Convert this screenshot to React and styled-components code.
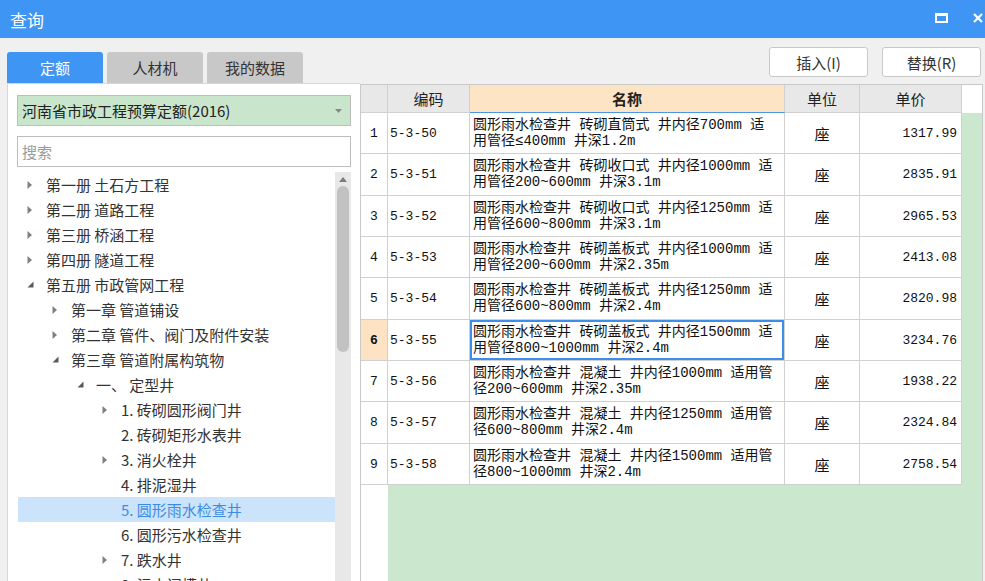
import React from "react";
import styled, { createGlobalStyle, css } from "styled-components";

const GlobalStyle = createGlobalStyle`
  html, body {
    margin: 0;
    padding: 0;
    overflow: hidden;
    background: #f0f0f0;
  }
  body {
    font-family: "Noto Sans CJK SC", "Noto Sans", sans-serif;
    color: #333;
  }
`;

const tabs = ["定额", "人材机", "我的数据"];

const tree = [
  { level: 1, arrow: "closed", text: "第一册 土石方工程" },
  { level: 1, arrow: "closed", text: "第二册 道路工程" },
  { level: 1, arrow: "closed", text: "第三册 桥涵工程" },
  { level: 1, arrow: "closed", text: "第四册 隧道工程" },
  { level: 1, arrow: "open", text: "第五册 市政管网工程" },
  { level: 2, arrow: "closed", text: "第一章 管道铺设" },
  { level: 2, arrow: "closed", text: "第二章 管件、阀门及附件安装" },
  { level: 2, arrow: "open", text: "第三章 管道附属构筑物" },
  { level: 3, arrow: "open", text: "一、 定型井" },
  { level: 4, arrow: "closed", text: "1. 砖砌圆形阀门井" },
  { level: 4, text: "2. 砖砌矩形水表井" },
  { level: 4, arrow: "closed", text: "3. 消火栓井" },
  { level: 4, text: "4. 排泥湿井" },
  { level: 4, text: "5. 圆形雨水检查井", selected: true },
  { level: 4, text: "6. 圆形污水检查井" },
  { level: 4, arrow: "closed", text: "7. 跌水井" },
  { level: 4, text: "8. 污水闸槽井" },
];

const rows = [
  ["5-3-50", ["圆形雨水检查井 砖砌直筒式 井内径700mm 适", "用管径≤400mm 井深1.2m"], "1317.99"],
  ["5-3-51", ["圆形雨水检查井 砖砌收口式 井内径1000mm 适", "用管径200~600mm 井深3.1m"], "2835.91"],
  ["5-3-52", ["圆形雨水检查井 砖砌收口式 井内径1250mm 适", "用管径600~800mm 井深3.1m"], "2965.53"],
  ["5-3-53", ["圆形雨水检查井 砖砌盖板式 井内径1000mm 适", "用管径200~600mm 井深2.35m"], "2413.08"],
  ["5-3-54", ["圆形雨水检查井 砖砌盖板式 井内径1250mm 适", "用管径600~800mm 井深2.4m"], "2820.98"],
  ["5-3-55", ["圆形雨水检查井 砖砌盖板式 井内径1500mm 适", "用管径800~1000mm 井深2.4m"], "3234.76"],
  ["5-3-56", ["圆形雨水检查井 混凝土 井内径1000mm 适用管", "径200~600mm 井深2.35m"], "1938.22"],
  ["5-3-57", ["圆形雨水检查井 混凝土 井内径1250mm 适用管", "径600~800mm 井深2.4m"], "2324.84"],
  ["5-3-58", ["圆形雨水检查井 混凝土 井内径1500mm 适用管", "径800~1000mm 井深2.4m"], "2758.54"],
];

const SELECTED_ROW = 5;
const ROW_PITCH = 41.33;
const COLS = "27px 82px 315px 75px 102px";
const GRID_LINE = "#d0d0d0";
const MONO = `"Liberation Mono", "Noto Sans CJK SC", monospace`;

// whole-pixel row heights that add up to the fractional pitch of the original grid
const rowHeight = (i) => Math.round((i + 1) * ROW_PITCH) - Math.round(i * ROW_PITCH);

const Window = styled.div`
  width: 985px;
  height: 581px;
  display: flex;
  flex-direction: column;
  background: #f0f0f0;
  overflow: hidden;
`;

const TitleBar = styled.div`
  height: 38px;
  flex: none;
  display: flex;
  align-items: center;
  padding: 0 2px 0 10px;
  background: #3f95f4;
  color: #fff;
  font-size: 17px;
`;

const Title = styled.div`
  flex: 1;
`;

const TitleIcons = styled.div`
  display: flex;
  align-items: center;
  gap: 25px;
  margin-top: -2px;
`;

const Content = styled.div`
  flex: 1;
  min-height: 0;
  display: flex;
  flex-direction: column;
  padding: 0 2px 0 7px;
`;

const TopRow = styled.div`
  height: 45px;
  flex: none;
  display: flex;
  justify-content: space-between;
`;

const Tabs = styled.div`
  display: flex;
  gap: 4px;
  align-self: flex-end;
`;

const Tab = styled.div`
  width: 96px;
  height: 31px;
  display: flex;
  align-items: center;
  justify-content: center;
  border-radius: 3px 3px 0 0;
  font-size: 15px;
  background: ${(p) => (p.$active ? "#3f95f4" : "#c8c8c8")};
  color: ${(p) => (p.$active ? "#fff" : "#333")};
`;

const Actions = styled.div`
  display: flex;
  gap: 14px;
  margin: 9px 2px 0 0;
`;

const ActionButton = styled.div`
  width: 99px;
  height: 30px;
  box-sizing: border-box;
  display: flex;
  align-items: center;
  justify-content: center;
  border: 1px solid #c9c9c9;
  border-radius: 3px;
  background: #fff;
  font-size: 15px;
  color: #333;
`;

const Main = styled.div`
  flex: 1;
  min-height: 0;
  display: flex;
`;

const LeftPanel = styled.div`
  width: 353px;
  flex: none;
  box-sizing: border-box;
  display: flex;
  flex-direction: column;
  padding: 11px 0 0 9px;
  background: #fff;
  border-left: 1px solid #d8d8d8;
  border-top: 1px solid #d8d8d8;
`;

const Field = styled.div`
  width: 334px;
  height: 31px;
  flex: none;
  box-sizing: border-box;
  display: flex;
  align-items: center;
  justify-content: space-between;
  padding: 0 8px 0 4px;
  border: 1px solid #bdbdbd;
  font-size: 15px;
  background: ${(p) => (p.$green ? "#c9e6cc" : "#fff")};
  color: ${(p) => (p.$green ? "#222" : "#9a9a9a")};
  margin-top: ${(p) => (p.$green ? 0 : 10)}px;
`;

const TreeBox = styled.div`
  width: 334px;
  flex: 1;
  min-height: 0;
  margin-top: 5px;
  padding-left: 1px;
  box-sizing: border-box;
  display: flex;
`;

const TreeList = styled.div`
  flex: 1;
  overflow: hidden;
`;

const TreeRow = styled.div`
  height: 25px;
  display: flex;
  align-items: center;
  padding-left: ${(p) => 9 + (p.$level - 1) * 25}px;
  font-size: 15px;
  white-space: nowrap;
  background: ${(p) => (p.$selected ? "#cce4fb" : "transparent")};
  color: ${(p) => (p.$selected ? "#3b8de4" : "#333")};
`;

const ArrowBox = styled.div`
  width: 19px;
  flex: none;
  display: flex;
  align-items: center;
`;

const ScrollTrack = styled.div`
  width: 16px;
  flex: none;
  display: flex;
  flex-direction: column;
  align-items: center;
  background: #e8e8e8;
`;

const ScrollUp = styled.div`
  height: 14px;
  display: flex;
  align-items: center;
  justify-content: center;
`;

const ScrollThumb = styled.div`
  width: 12px;
  height: 166px;
  border-radius: 6px;
  background: #c2c2c2;
`;

const RightPane = styled.div`
  flex: 1;
  margin-top: 1px;
  display: flex;
  flex-direction: column;
  background: #fff;
  border: 1px solid #c9c9c9;
  border-bottom: none;
`;

const HeaderRow = styled.div`
  display: grid;
  grid-template-columns: ${COLS};
  height: 28px;
  flex: none;
`;

const HeadCell = styled.div`
  box-sizing: border-box;
  display: flex;
  align-items: center;
  justify-content: center;
  font-size: 15px;
  color: #222;
  border-right: 1px solid ${GRID_LINE};
  border-bottom: 1px solid ${GRID_LINE};
  background: #e8e8e8;
  ${(p) =>
    p.$active &&
    css`
      background: #fde4c5;
      font-weight: bold;
      border-bottom-color: #4b95e8;
    `}
`;

const Body = styled.div`
  flex: 1;
  background: linear-gradient(to right, #fff 27px, #cbe8cf 27px);
`;

const Row = styled.div`
  display: grid;
  grid-template-columns: ${COLS};
  height: ${(p) => p.$h}px;
  width: max-content;
`;

const Cell = styled.div`
  box-sizing: border-box;
  display: flex;
  align-items: center;
  background: #fff;
  color: #111;
  border-right: 1px solid ${GRID_LINE};
  border-bottom: 1px solid ${GRID_LINE};
  overflow: hidden;
`;

const RowHead = styled(Cell)`
  justify-content: center;
  font-family: ${MONO};
  font-size: 13px;
  ${(p) =>
    p.$selected &&
    css`
      background: #fde3c4;
      font-weight: bold;
    `}
`;

const CodeCell = styled(Cell)`
  padding-left: 2px;
  font-family: ${MONO};
  font-size: 13px;
`;

const NameCell = styled(Cell)`
  padding: 0 2px 1px 3px;
  font-family: ${MONO};
  font-size: 14px;
  line-height: 16px;
  white-space: nowrap;
  ${(p) =>
    p.$selected &&
    css`
      box-shadow: inset 0 0 0 2px #3d8ee8;
    `}
`;

const UnitCell = styled(Cell)`
  justify-content: center;
  font-size: 15px;
`;

const PriceCell = styled(Cell)`
  justify-content: flex-end;
  padding-right: 4px;
  font-family: ${MONO};
  font-size: 13px;
`;

const Arrow = ({ open }) =>
  open ? (
    <svg width="7" height="7" viewBox="0 0 7 7">
      <path d="M6.5 0.5 L6.5 6.5 L0.5 6.5 Z" fill="#5a5a5a" />
    </svg>
  ) : (
    <svg width="6" height="8" viewBox="0 0 6 8">
      <path d="M0.5 0 L5 4 L0.5 8 Z" fill="#808080" />
    </svg>
  );

const App = () => {
  return (
    <Window>
      <GlobalStyle />
      <TitleBar>
        <Title>查询</Title>
        <TitleIcons>
          <svg width="13" height="10" viewBox="0 0 13 10">
            <rect x="1" y="1.5" width="11" height="7.5" fill="none" stroke="#fff" strokeWidth="2" />
            <rect x="0" y="0" width="13" height="3" fill="#fff" />
          </svg>
          <svg width="10" height="10" viewBox="0 0 10 10">
            <path d="M1 1 L9 9 M9 1 L1 9" stroke="#fff" strokeWidth="2.2" />
          </svg>
        </TitleIcons>
      </TitleBar>

      <Content>
        <TopRow>
          <Tabs>
            {tabs.map((t, i) => (
              <Tab key={t} $active={i === 0}>
                {t}
              </Tab>
            ))}
          </Tabs>
          <Actions>
            <ActionButton>插入(I)</ActionButton>
            <ActionButton>替换(R)</ActionButton>
          </Actions>
        </TopRow>

        <Main>
          <LeftPanel>
            <Field $green>
              <span>河南省市政工程预算定额(2016)</span>
              <svg width="7" height="4" viewBox="0 0 7 4">
                <path d="M0 0 L7 0 L3.5 4 Z" fill="#888" />
              </svg>
            </Field>
            <Field>搜索</Field>
            <TreeBox>
              <TreeList>
                {tree.map((n, i) => (
                  <TreeRow key={i} $level={n.level} $selected={n.selected}>
                    <ArrowBox>{n.arrow && <Arrow open={n.arrow === "open"} />}</ArrowBox>
                    {n.text}
                  </TreeRow>
                ))}
              </TreeList>
              <ScrollTrack>
                <ScrollUp>
                  <svg width="8" height="5" viewBox="0 0 8 5">
                    <path d="M0 5 L4 0 L8 5 Z" fill="#7d7d7d" />
                  </svg>
                </ScrollUp>
                <ScrollThumb />
              </ScrollTrack>
            </TreeBox>
          </LeftPanel>

          <RightPane>
            <HeaderRow>
              <HeadCell />
              <HeadCell>编码</HeadCell>
              <HeadCell $active>名称</HeadCell>
              <HeadCell>单位</HeadCell>
              <HeadCell>单价</HeadCell>
            </HeaderRow>
            <Body>
              {rows.map(([code, name, price], i) => {
                const sel = i === SELECTED_ROW;
                return (
                  <Row key={code} $h={rowHeight(i)}>
                    <RowHead $selected={sel}>{i + 1}</RowHead>
                    <CodeCell>{code}</CodeCell>
                    <NameCell $selected={sel}>
                      <div>
                        {name[0]}
                        <br />
                        {name[1]}
                      </div>
                    </NameCell>
                    <UnitCell>座</UnitCell>
                    <PriceCell>{price}</PriceCell>
                  </Row>
                );
              })}
            </Body>
          </RightPane>
        </Main>
      </Content>
    </Window>
  );
};

export default App;
